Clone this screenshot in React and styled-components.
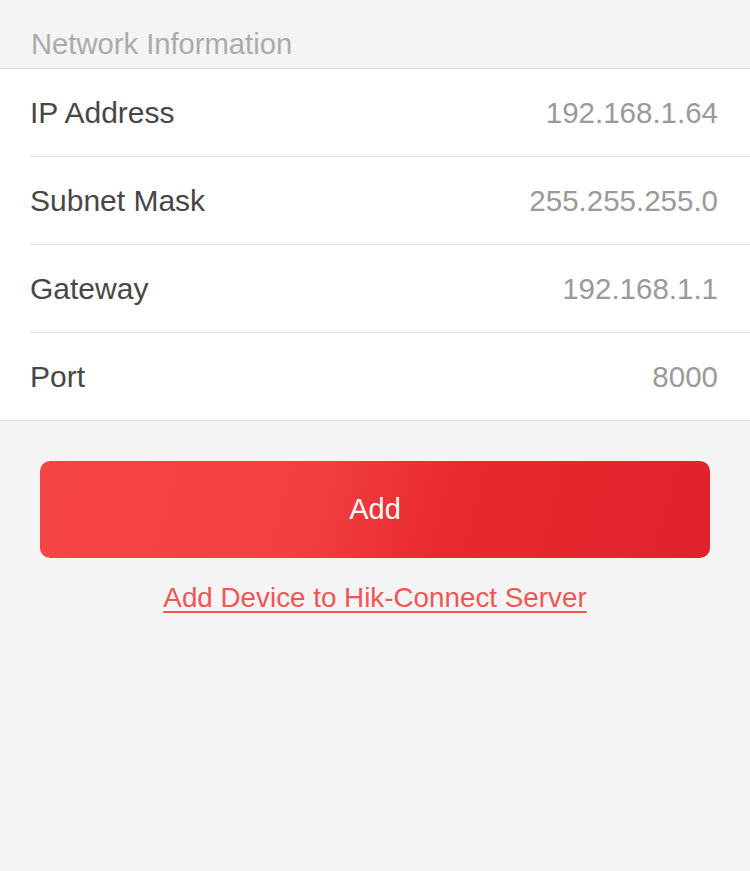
import React from 'react';
import styled, { createGlobalStyle } from 'styled-components';

const GlobalStyle = createGlobalStyle`
  html, body {
    margin: 0;
    padding: 0;
    background: #f4f4f4;
    font-family: "Liberation Sans", Arial, sans-serif;
  }
`;

const Page = styled.div`
  min-height: 871px;
  background: #f4f4f4;
`;

const SectionHeader = styled.div`
  height: 68px;
  box-sizing: border-box;
  padding: 20px 0 0 31px;
  display: flex;
  align-items: center;
  font-size: 29.2px;
  color: #ababab;
`;

const List = styled.div`
  background: #fff;
  border-top: 1px solid #dddddd;
  border-bottom: 1px solid #dddddd;
`;

const Row = styled.div`
  height: ${(p) => (p.$last ? '87px' : '88px')};
  box-sizing: border-box;
  margin-left: 30px;
  padding-right: 32px;
  display: flex;
  align-items: center;
  justify-content: space-between;
  border-bottom: ${(p) => (p.$last ? 'none' : '1px solid #dddddd')};
`;

const Label = styled.span`
  font-size: 30px;
  color: #474747;
`;

const Value = styled.span`
  font-size: 29.5px;
  color: #9a9a9a;
`;

const AddButton = styled.button`
  display: flex;
  align-items: center;
  justify-content: center;
  box-sizing: border-box;
  width: calc(100% - 80px);
  height: 97px;
  margin: 40px 40px 0;
  border: none;
  border-radius: 10px;
  background: linear-gradient(105deg, #f64547 0%, #f33f42 40%, #e8292f 62%, #e0222b 100%);
  color: #fff;
  font-family: inherit;
  font-size: 29px;
  cursor: pointer;
`;

const LinkRow = styled.div`
  display: flex;
  justify-content: center;
  margin-top: 24px;
`;

const ServerLink = styled.a`
  font-size: 27.8px;
  color: #ef5656;
  text-decoration: underline;
  text-underline-offset: 4px;
  text-decoration-thickness: 2px;
  cursor: pointer;
`;

const rows = [
  { label: 'IP Address', value: '192.168.1.64' },
  { label: 'Subnet Mask', value: '255.255.255.0' },
  { label: 'Gateway', value: '192.168.1.1' },
  { label: 'Port', value: '8000' },
];

export default function App() {
  return (
    <Page>
      <GlobalStyle />
      <SectionHeader>Network Information</SectionHeader>
      <List>
        {rows.map((r, i) => (
          <Row key={r.label} $last={i === rows.length - 1}>
            <Label>{r.label}</Label>
            <Value>{r.value}</Value>
          </Row>
        ))}
      </List>
      <AddButton>Add</AddButton>
      <LinkRow>
        <ServerLink>Add Device to Hik-Connect Server</ServerLink>
      </LinkRow>
    </Page>
  );
}
